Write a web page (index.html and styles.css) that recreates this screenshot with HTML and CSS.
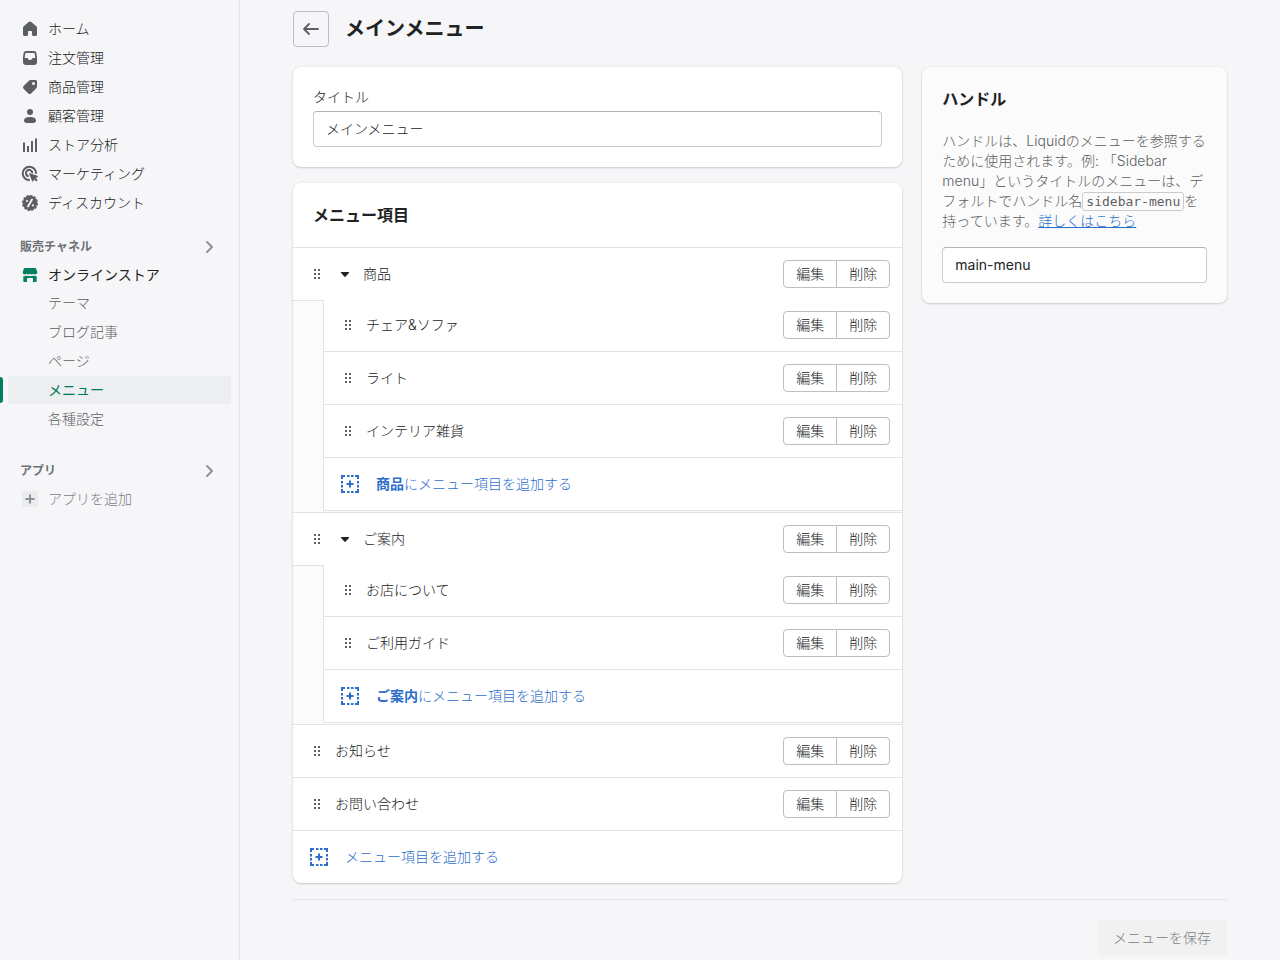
FILE: index.html
```html
<!DOCTYPE html>
<html lang="ja">
<head>
<meta charset="utf-8">
<meta name="viewport" content="width=device-width, initial-scale=1">
<title>メインメニュー</title>
<link rel="stylesheet" href="styles.css">
</head>
<body>
<svg class="sprite" aria-hidden="true">
  <symbol id="i-drag" viewBox="0 0 20 20"><path d="M7 5h2v2H7zM11 5h2v2h-2zM7 9h2v2H7zM11 9h2v2h-2zM7 13h2v2H7zM11 13h2v2h-2z"/></symbol>
  <symbol id="i-caret" viewBox="0 0 20 20"><path d="M6.500 8h7c.6 0 .8.500.4.900l-3.200 3.600a.9.9 0 0 1-1.400 0L6.100 8.900C5.700 8.500 5.900 8 6.500 8z"/></symbol>
  <symbol id="i-chevron" viewBox="0 0 20 20"><path d="M8 5l5 5-5 5" fill="none" stroke="currentColor" stroke-width="1.900" stroke-linecap="round" stroke-linejoin="round"/></symbol>
  <symbol id="i-add" viewBox="0 0 20 20"><path d="M1 5V1h4v2H3v2zM7 1h2.500v2H7zM11 1h2.500v2H11zM15 1h4v4h-2V3h-2zM1 7h2v2.500H1zM1 11h2v2.500H1zM17 7h2v2.500h-2zM17 11h2v2.500h-2zM1 15h2v2h2v2H1zM7 17h2.500v2H7zM11 17h2.500v2H11zM15 17h2v-2h2v4h-4zM9 6.500h2V9h2.500v2H11v2.500H9V11H6.500V9H9z"/></symbol>
</svg>
<div class="app">
  <nav class="sidebar">
    <ul class="nav">
      <li><a class="nav-link" href="#"><svg class="icon" viewBox="0 0 20 20"><path d="M8.700 3.100a2 2 0 0 1 2.600 0l5 4.100c.5.400.7.900.7 1.500v6.800c0 .8-.7 1.500-1.500 1.500h-2c-.8 0-1.500-.7-1.500-1.500V13c0-.6-.4-1-1-1H9c-.6 0-1 .4-1 1v2.500c0 .8-.7 1.500-1.500 1.500h-2c-.8 0-1.500-.7-1.500-1.500V8.700c0-.6.2-1.100.7-1.500z"/></svg>ホーム</a></li>
      <li><a class="nav-link" href="#"><svg class="icon" viewBox="0 0 20 20"><path fill-rule="evenodd" d="M6 3h8c1.200 0 2.200.8 2.400 2l.6 4.500V14a3 3 0 0 1-3 3H6a3 3 0 0 1-3-3V9.500L3.600 5C3.800 3.800 4.800 3 6 3zm0 2c-.4 0-.6.2-.7.600L4.700 10H7c.5 0 .8.300 1 .7.300.8 1 1.300 2 1.300s1.700-.5 2-1.300c.2-.4.5-.7 1-.7h2.300l-.6-4.400c-.1-.4-.3-.6-.7-.6z"/></svg>注文管理</a></li>
      <li><a class="nav-link" href="#"><svg class="icon" viewBox="0 0 20 20"><path fill-rule="evenodd" d="M10.800 3H15.500c.8 0 1.500.7 1.500 1.500v4.700c0 .8-.3 1.600-.9 2.200l-5 5a2 2 0 0 1-2.800 0l-4.700-4.700a2 2 0 0 1 0-2.800l5-5c.6-.6 1.400-.9 2.200-.9zM13.500 8a1.500 1.500 0 1 0 0-3 1.500 1.500 0 0 0 0 3z"/></svg>商品管理</a></li>
      <li><a class="nav-link" href="#"><svg class="icon" viewBox="0 0 20 20"><circle cx="10" cy="6" r="3"/><path d="M4 14.500C4 12 6.700 11 10 11s6 1 6 3.500c0 1.600-1 2.500-2.500 2.500h-7C5 17 4 16.100 4 14.500z"/></svg>顧客管理</a></li>
      <li><a class="nav-link" href="#"><svg class="icon" viewBox="0 0 20 20"><path d="M3 7.500h2V17H3zM7 11h2v6H7zM11 6h2v11h-2zM15 3.500h2V17h-2z"/></svg>ストア分析</a></li>
      <li><a class="nav-link" href="#"><svg class="icon" viewBox="0 0 20 20"><path d="M9 16.100A6.700 6.700 0 1 1 16.100 9" fill="none" stroke="currentColor" stroke-width="2" stroke-linecap="round"/><path d="M7.800 12a3.200 3.200 0 1 1 4.500-3.500" fill="none" stroke="currentColor" stroke-width="2" stroke-linecap="round"/><path d="M10 9.200l7.400 2.600c.7.300.7 1.100 0 1.400l-1.700.8 2 2-1.300 1.400-2.100-2-.9 1.700c-.3.700-1.100.6-1.400-.1L9.200 10c-.2-.5.300-1 .8-.8z"/></svg>マーケティング</a></li>
      <li><a class="nav-link" href="#"><svg class="icon" viewBox="0 0 20 20"><circle cx="10" cy="10" r="7.200"/><circle cx="10" cy="10" r="7.300" fill="none" stroke="currentColor" stroke-width="1.400" stroke-dasharray="2.600 1.200"/><path d="M12 6.500l-4 7" stroke="#f6f6f8" stroke-width="1.800" stroke-linecap="round"/><circle cx="7" cy="8" r="1.100" fill="#f6f6f8"/><circle cx="13" cy="12.300" r="1.100" fill="#f6f6f8"/></svg>ディスカウント</a></li>
    </ul>
    <h2 class="nav-heading">販売チャネル<svg class="icon"><use href="#i-chevron"/></svg></h2>
    <a class="nav-link nav-link-strong" href="#"><svg class="icon icon-store" viewBox="0 0 20 20"><path d="M5 3h10c.6 0 1.100.3 1.300.9L17.200 7c.3 1.300-.7 2.500-2 2.500-.7 0-1.300-.3-1.700-.8-.4.500-1 .8-1.700.8-.8 0-1.400-.3-1.800-.8-.4.500-1 .8-1.800.8-.7 0-1.300-.3-1.700-.8-.4.500-1 .8-1.700.8-1.300 0-2.300-1.200-2-2.500l.9-3.100C3.900 3.300 4.400 3 5 3z"/><path d="M3.300 11.200c1.200.2 2.300-.1 3.200-.7 1 .7 2.400.8 3.500.2 1.100.6 2.500.5 3.500-.2.900.6 2 .9 3.200.7v4.800c0 .6-.4 1-1 1H13v-3.500c0-.3-.2-.5-.5-.5h-5c-.3 0-.5.200-.5.500V17H4.300c-.6 0-1-.4-1-1z"/></svg>オンラインストア</a>
    <ul class="nav nav-sub">
      <li><a class="nav-link" href="#">テーマ</a></li>
      <li><a class="nav-link" href="#">ブログ記事</a></li>
      <li><a class="nav-link" href="#">ページ</a></li>
      <li><a class="nav-link is-active" href="#" aria-current="page">メニュー</a></li>
      <li><a class="nav-link" href="#">各種設定</a></li>
    </ul>
    <h2 class="nav-heading nav-heading-apps">アプリ<svg class="icon"><use href="#i-chevron"/></svg></h2>
    <a class="nav-link nav-link-muted" href="#"><svg class="icon" viewBox="0 0 20 20"><rect x="2" y="2" width="16" height="16" rx="1" fill="#ebeced"/><path d="M9 5.500h2V9h3.500v2H11v3.500H9V11H5.500V9H9z" fill="#8c9196"/></svg>アプリを追加</a>
  </nav>

  <main class="page">
    <header class="page-header">
      <button class="back" type="button" aria-label="戻る"><svg class="icon" viewBox="0 0 20 20"><path d="M17 10H3.500M8 5l-5 5 5 5" fill="none" stroke="currentColor" stroke-width="1.800" stroke-linecap="round" stroke-linejoin="round"/></svg></button>
      <h1 class="page-title">メインメニュー</h1>
    </header>
    <div class="columns">
      <div class="stack">
        <section class="card card-body">
          <label class="label" for="title">タイトル</label>
          <input class="input" id="title" type="text" value="メインメニュー">
        </section>
        <section class="card">
          <h2 class="card-title card-header">メニュー項目</h2>
          <ul class="menu">
            <li class="item">
              <div class="row"><svg class="icon"><use href="#i-drag"/></svg><svg class="icon icon-dark"><use href="#i-caret"/></svg><span class="name">商品</span><div class="actions"><button type="button">編集</button><button type="button">削除</button></div></div>
              <div class="group">
                <div class="rail"></div>
                <ul class="children">
                  <li class="row"><svg class="icon"><use href="#i-drag"/></svg><span class="name">チェア&amp;ソファ</span><div class="actions"><button type="button">編集</button><button type="button">削除</button></div></li>
                  <li class="row"><svg class="icon"><use href="#i-drag"/></svg><span class="name">ライト</span><div class="actions"><button type="button">編集</button><button type="button">削除</button></div></li>
                  <li class="row"><svg class="icon"><use href="#i-drag"/></svg><span class="name">インテリア雑貨</span><div class="actions"><button type="button">編集</button><button type="button">削除</button></div></li>
                  <li class="add-row"><button class="add" type="button"><svg class="icon"><use href="#i-add"/></svg><span><b>商品</b>にメニュー項目を追加する</span></button></li>
                </ul>
              </div>
            </li>
            <li class="item">
              <div class="row"><svg class="icon"><use href="#i-drag"/></svg><svg class="icon icon-dark"><use href="#i-caret"/></svg><span class="name">ご案内</span><div class="actions"><button type="button">編集</button><button type="button">削除</button></div></div>
              <div class="group">
                <div class="rail"></div>
                <ul class="children">
                  <li class="row"><svg class="icon"><use href="#i-drag"/></svg><span class="name">お店について</span><div class="actions"><button type="button">編集</button><button type="button">削除</button></div></li>
                  <li class="row"><svg class="icon"><use href="#i-drag"/></svg><span class="name">ご利用ガイド</span><div class="actions"><button type="button">編集</button><button type="button">削除</button></div></li>
                  <li class="add-row"><button class="add" type="button"><svg class="icon"><use href="#i-add"/></svg><span><b>ご案内</b>にメニュー項目を追加する</span></button></li>
                </ul>
              </div>
            </li>
            <li class="item"><div class="row"><svg class="icon"><use href="#i-drag"/></svg><span class="name">お知らせ</span><div class="actions"><button type="button">編集</button><button type="button">削除</button></div></div></li>
            <li class="item"><div class="row"><svg class="icon"><use href="#i-drag"/></svg><span class="name">お問い合わせ</span><div class="actions"><button type="button">編集</button><button type="button">削除</button></div></div></li>
            <li class="item"><button class="add" type="button"><svg class="icon"><use href="#i-add"/></svg><span>メニュー項目を追加する</span></button></li>
          </ul>
        </section>
      </div>
      <aside class="card card-body card-subdued">
        <h2 class="card-title"><label for="handle">ハンドル</label></h2>
        <p class="help">ハンドルは、Liquidのメニューを参照するために使用されます。例: 「Sidebar menu」というタイトルのメニューは、デフォルトでハンドル名<code>sidebar-menu</code>を持っています。<a href="#">詳しくはこちら</a></p>
        <input class="input" id="handle" type="text" value="main-menu">
      </aside>
    </div>
    <footer class="page-footer"><button class="save" type="button" disabled>メニューを保存</button></footer>
  </main>
</div>
</body>
</html>
```
FILE: styles.css
```css
* { box-sizing: border-box; }

body {
  margin: 0;
  background: #f6f6f8;
  color: #202223;
  font-family: Inter, "Noto Sans CJK JP", sans-serif;
  font-size: 14px;
  font-weight: 300;
  line-height: 20px;
}

button, input { font: inherit; color: inherit; }
button { margin: 0; padding: 0; border: 0; background: none; }
ul { margin: 0; padding: 0; list-style: none; }
h1, h2, p { margin: 0; }

.sprite { position: absolute; width: 0; height: 0; }
.icon { flex: none; display: block; width: 20px; height: 20px; fill: currentColor; color: #5c5f62; }
.icon-dark { color: #202223; }
.icon-store { color: #008060; }

.app { display: grid; grid-template-columns: 240px minmax(0, 1fr); min-height: 100vh; }

/* Sidebar */
.sidebar { padding-top: 15px; border-right: 1px solid #e1e3e5; }
.nav { display: grid; gap: 1px; }
.nav-link {
  position: relative;
  display: flex;
  align-items: center;
  gap: 8px;
  margin: 0 8px;
  padding: 0 12px;
  color: #202223;
  line-height: 28px;
  text-decoration: none;
}
.nav-link-muted { color: #7b8085; }
.nav-sub .nav-link { padding-left: 40px; color: #5c5f62; }
.nav-sub .is-active { background: #edeeef; color: #007a5c; font-weight: 400; }
.nav-link-strong { font-weight: 400; }
.is-active::before {
  content: "";
  position: absolute;
  top: 1px;
  bottom: 1px;
  left: -8px;
  width: 3px;
  border-radius: 0 3px 3px 0;
  background: #008060;
}
.nav-heading {
  display: flex;
  align-items: center;
  justify-content: space-between;
  margin: 20px 20px 4px;
  color: #6d7175;
  font-size: 12px;
  font-weight: 600;
  line-height: 20px;
}
.nav-heading .icon { color: #8c9196; }
.nav-heading-apps { margin-top: 28px; }

/* Page */
.page { padding: 11px 53px 4px; }
.page-header { display: flex; align-items: center; gap: 16px; margin-bottom: 20px; }
.back {
  display: grid;
  place-items: center;
  width: 36px;
  height: 36px;
  border: 1px solid #babfc3;
  border-radius: 4px;
}
.page-title { font-size: 20px; font-weight: 600; line-height: 28px; }
.columns { display: grid; grid-template-columns: minmax(0, 2fr) minmax(0, 1fr); gap: 20px; align-items: start; }
.stack { display: grid; gap: 16px; }

.card {
  overflow: hidden;
  border-radius: 8px;
  background: #fff;
  box-shadow: 0 0 3px rgba(23, 24, 24, 0.08), 0 1px 2px rgba(0, 0, 0, 0.15);
}
.card-body { padding: 20px; }
.card-subdued { background: #fbfbfc; }
.card-title { font-size: 16px; font-weight: 600; line-height: 24px; }
.card-header { padding: 20px; }

.label { display: block; margin-bottom: 4px; }
.input {
  display: block;
  width: 100%;
  height: 36px;
  padding: 0 12px 2px;
  border: 1px solid #c9cccf;
  border-top-color: #aeb4b9;
  border-radius: 4px;
  background: #fff;
}
#handle { font-weight: 400; }
.help { margin: 20px 0 16px; color: #5c5f62; }
.help code {
  padding: 1px 3px;
  border: 1px solid #c9cccf;
  border-radius: 3px;
  font-family: "DejaVu Sans Mono", monospace;
  font-size: 13px;
  line-height: 16px;
}
.help a { color: #2c6ecb; }

/* Menu tree */
.item { border-top: 1px solid #e1e3e5; }
.row { display: flex; align-items: center; gap: 8px; padding: 12px 12px 12px 14px; }
.name { flex: 1; }
.group { display: grid; grid-template-columns: 30px minmax(0, 1fr); background: #fbfbfc; }
.rail { border-top: 1px solid #e1e3e5; }
.children {
  margin-bottom: 1px;
  border-left: 1px solid #e1e3e5;
  border-bottom: 1px solid #e1e3e5;
  background: #fff;
}
.children > li + li { border-top: 1px solid #e1e3e5; }
.children > li:first-child { padding-top: 11px; }

.actions { display: flex; }
.actions button {
  padding: 3px 12px;
  border: 1px solid #babfc3;
  border-radius: 4px 0 0 4px;
  background: #fff;
}
.actions button + button { margin-left: -1px; border-radius: 0 4px 4px 0; }

.add { display: flex; align-items: center; gap: 16px; width: 100%; padding: 16px; color: #2c6ecb; text-align: left; }
.add .icon { color: #2c6ecb; }
.add b { font-weight: 700; }

.page-footer { display: flex; justify-content: flex-end; margin-top: 16px; padding-top: 20px; border-top: 1px solid #e1e3e5; }
.save { padding: 8px 16px; border-radius: 4px; background: #f1f1f2; color: #7b8085; }
```
